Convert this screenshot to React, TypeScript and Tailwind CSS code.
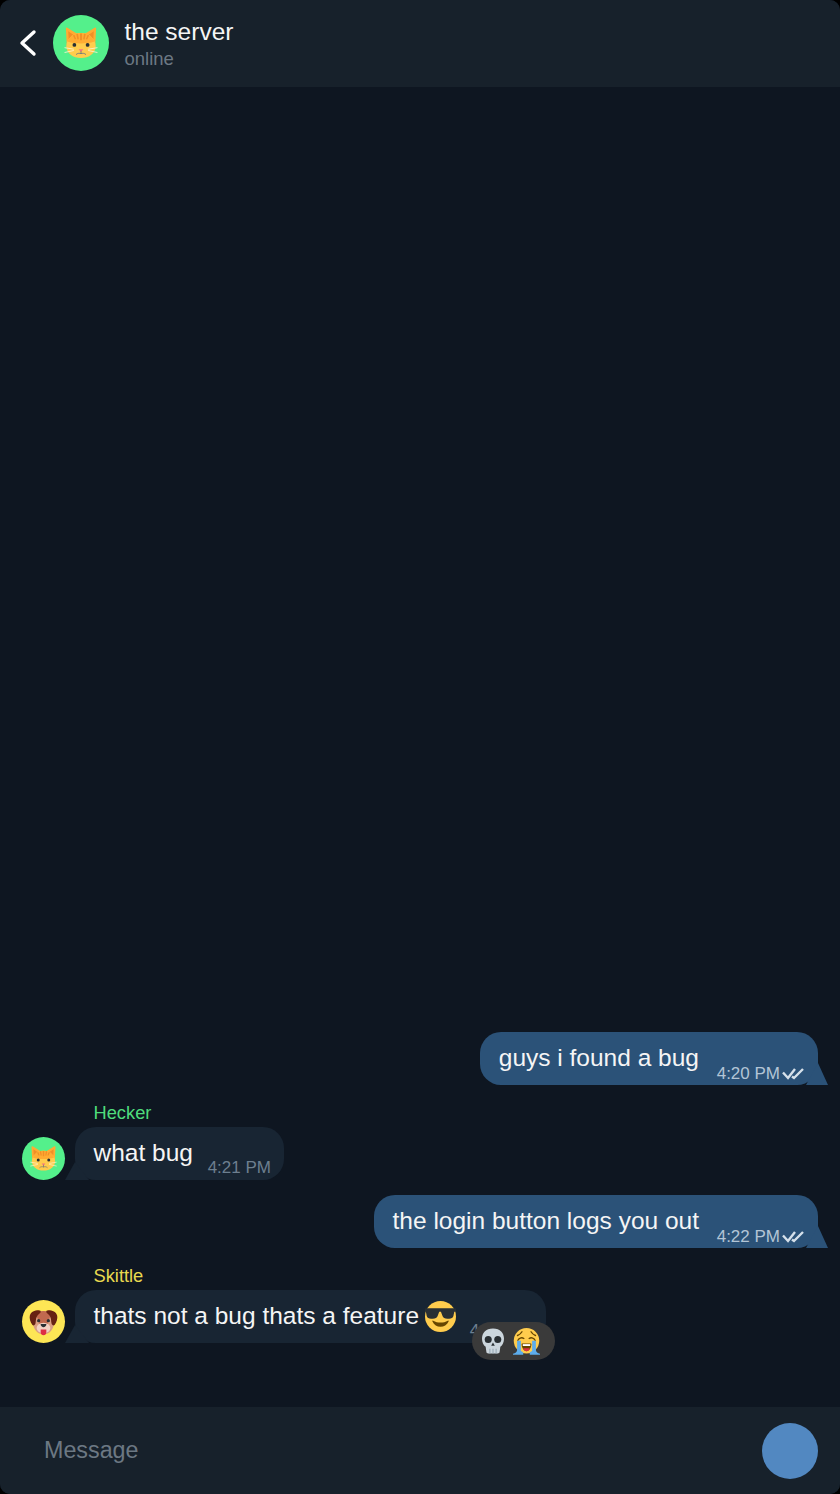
import type { ReactNode } from 'react';

function CatFace({ className }: { className: string }) {
  return (
    <svg className={className} viewBox="0 0 36 36">
      <path fill="#FFAC33" d="M2 2.500c0-.8.800-1.200 1.500-.7L17 10 3 22zM34 2.500c0-.8-.8-1.200-1.500-.7L19 10l14 12z" />
      <path fill="#F18F26" d="M4.500 5.500L5 15l6-5zM31.500 5.500L31 15l-6-5z" />
      <path fill="#FFCC4D" d="M33.500 21.500C33.500 29 26.500 34 18 34S2.500 29 2.500 21.500 9.500 7.500 18 7.500s15.500 6.500 15.500 14z" />
      <path fill="#FFAC33" d="M18 7.500c-6.500 0-12 3.500-14.300 9C8 18 13 18.500 18 18.500s10-.5 14.300-2C30 11 24.500 7.500 18 7.500z" />
      <path fill="#F18F26" d="M17 8h2v7h-2zM13 8.500l1.800-.4.9 6-1.500.2zM23 8.500l-1.800-.4-.9 6 1.500.2zM9.500 10l1.500-.8 1.800 4.500-1.300.5zM26.500 10l-1.500-.8-1.800 4.500 1.300.5z" />
      <circle fill="#292F33" cx="11" cy="20" r="2" />
      <circle fill="#292F33" cx="25" cy="20" r="2" />
      <path fill="#F4707F" d="M15.500 24.500h5L18 27.500z" />
      <path fill="none" stroke="#67757F" strokeWidth="0.9" strokeLinecap="round" d="M18 27v2.200M13 30c1.500-1.400 3.500-1.200 5-.8 1.500-.4 3.500-.6 5 .8" />
      <path fill="none" stroke="#FEF3D0" strokeWidth="0.9" strokeLinecap="round" d="M1 23l9 1.500M1 28l9-2M35 23l-9 1.500M35 28l-9-2" />
    </svg>
  );
}

function DogFace({ className }: { className: string }) {
  return (
    <svg className={className} viewBox="0 0 36 36">
      <path fill="#D99E82" d="M31 19c0 9-5.800 15-13 15S5 28 5 19 10.800 5 18 5s13 5 13 14z" />
      <path fill="#C1694F" d="M18 5c-4 0-7 2-8.800 5.500C11 15 13 19 13 22h10c0-3 2-7 3.800-11.500C25 7 22 5 18 5z" />
      <path fill="#662113" d="M12 4C7 4 2 6 1 11c-.6 3 .5 8 3 11 1.500 1.700 3.500.5 4-1.500.8-3.500 0-5 2-9 1-2.500 4-3.500 4.500-5C15 5.200 14 4 12 4zM24 4c5 0 10 2 11 7 .6 3-.5 8-3 11-1.500 1.700-3.500.5-4-1.500-.8-3.500 0-5-2-9-1-2.500-4-3.500-4.500-5C21 5.200 22 4 24 4z" />
      <ellipse fill="#F2D1C4" cx="18" cy="26" rx="8.500" ry="6.500" />
      <circle fill="#292F33" cx="12" cy="17" r="2" />
      <circle fill="#292F33" cx="24" cy="17" r="2" />
      <path fill="#292F33" d="M14.500 21h7c.5 2-2 4-3.500 4s-4-2-3.500-4z" />
      <path fill="#DD2E44" d="M14.500 28h7v3.500c0 2-1.500 3.500-3.500 3.500s-3.500-1.500-3.500-3.500z" />
    </svg>
  );
}

function Sunglasses({ className }: { className: string }) {
  return (
    <svg className={className} viewBox="0 0 36 36">
      <circle fill="#FFCC4D" cx="18" cy="18" r="18" />
      <path fill="#664500" d="M8.500 23.500c2 4.500 5.500 6.500 9.500 6.500s7.500-2 9.500-6.500c.2-.6-.4-1-1-.7C24 24.300 21 25 18 25s-6-.7-8.500-2.200c-.6-.3-1.200.1-1 .7z" />
      <path fill="#292F33" d="M1 8.500h34c.6 0 1 .4 1 1v2c0 .6-.4 1-1 1h-1l-1 5c-.5 2.300-2.500 3-5 3h-2c-3 0-5-1-6-4l-1.500-4h-2L15 16.500c-1 3-3 4-6 4H7c-2.500 0-4.500-.7-5-3l-1-5H1c-.6 0-1-.4-1-1v-2c0-.6.4-1 1-1z" />
    </svg>
  );
}

function Skull({ className }: { className: string }) {
  return (
    <svg className={className} viewBox="3 1 30 34">
      <path fill="#CCD6DD" d="M18 1C8 1 3 7.500 3 15c0 5 2 9 5 11l1 7c.2 1.300 1.200 2 2.500 2h13c1.300 0 2.300-.7 2.500-2l1-7c3-2 5-6 5-11 0-7.500-5-14-15-14z" />
      <circle fill="#292F33" cx="11.500" cy="16" r="4.800" />
      <circle fill="#292F33" cx="24.500" cy="16" r="4.800" />
      <path fill="#292F33" d="M18 20l2.500 4.500h-5z" />
      <path fill="#99AAB5" d="M13 28.500h1.500V35H13zM17.250 28.500h1.500V35h-1.500zM21.500 28.500H23V35h-1.500z" />
    </svg>
  );
}

function LoudCry({ className }: { className: string }) {
  return (
    <svg className={className} viewBox="0 0 36 36">
      <circle fill="#FFCC4D" cx="18" cy="17" r="17" />
      <path fill="none" stroke="#664500" strokeWidth="1.800" strokeLinecap="round" d="M6 10c2.500-1 4.500-2.500 6-5M30 10c-2.500-1-4.500-2.500-6-5" />
      <path fill="none" stroke="#664500" strokeWidth="1.800" strokeLinecap="round" strokeLinejoin="round" d="M6.500 16.500c1-3 5-4.500 8-2.500M29.500 16.500c-1-3-5-4.500-8-2.500" />
      <path fill="#664500" d="M12.500 20.500h11c.8 0 1 .5 1 1.200 0 4-2.500 9.300-6.500 9.300s-6.500-5.300-6.500-9.300c0-.7.200-1.200 1-1.200z" />
      <path fill="#DD2E44" d="M13.500 27h9c-1 2.500-2.500 4-4.500 4s-3.500-1.500-4.500-4z" />
      <path fill="#FFF" d="M13 21.500h10V24H13z" />
      <path fill="#5DADEC" d="M5.500 17h5v13.500c2.500 1 4 2.500 3 5H0c-1 0-1-1 0-1.200 3-.8 5.500-2.300 5.500-5zM30.500 17h-5v13.500c-2.500 1-4 2.500-3 5H36c1 0 1-1 0-1.200-3-.8-5.500-2.300-5.500-5z" />
    </svg>
  );
}

function DoubleCheck() {
  return (
    <svg className="w-[22px] h-[14px]" viewBox="0 0 22 14" fill="none" stroke="#d5e0ea" strokeWidth="2.400">
      <path d="M1 6.500l5 5.500L13 3" />
      <path d="M10 10.500l2 1.500 9-9" />
    </svg>
  );
}

function Outgoing({ text, time }: { text: string; time: string }) {
  return (
    <div className="flex justify-end pr-[22px]">
      <div className="relative h-[53px] rounded-[21px] bg-[#2b5278] pl-[18.500px] pr-[119px] flex items-center">
        <span className="text-[24.500px] text-[#f5f5f5] -mt-[1px]">{text}</span>
        <div className="absolute right-[14px] bottom-[-1px] flex items-center gap-[2px] text-[17px] text-[#b3c5d6]">
          <span>{time}</span>
          <DoubleCheck />
        </div>
        <svg className="absolute right-[-10px] bottom-0 w-[22px] h-[22px]" viewBox="0 0 22 22" fill="#2b5278">
          <path d="M12 0L22 22H0z" />
        </svg>
      </div>
    </div>
  );
}

function Incoming({
  name,
  nameColor,
  avatar,
  text,
  time,
  pad,
  children,
}: {
  name: string;
  nameColor: string;
  avatar: ReactNode;
  text: ReactNode;
  time: string;
  pad: string;
  children?: ReactNode;
}) {
  return (
    <div className="pl-[22px] flex items-end gap-[10px]">
      {avatar}
      <div className="flex flex-col">
        <div className={`h-[27px] pl-[18.500px] text-[18.300px] leading-[26px] ${nameColor}`}>{name}</div>
        <div className={`relative h-[53px] rounded-[21px] bg-[#182533] pl-[18.500px] flex items-center ${pad}`}>
          <span className="flex items-center text-[24.500px] text-[#f5f5f5] -mt-[1px]">{text}</span>
          <span className="absolute right-[13px] bottom-0 text-[17px] text-[#6d7f8f]">{time}</span>
          <svg className="absolute left-[-10px] bottom-0 w-[24px] h-[18px]" viewBox="0 0 24 18" fill="#182533">
            <path d="M10 0L24 18H0z" />
          </svg>
          {children}
        </div>
      </div>
    </div>
  );
}

export default function App() {
  return (
    <div className="h-[1494px] w-[840px] bg-black font-['Liberation_Sans',Arial,sans-serif]">
      <div className="h-full flex flex-col rounded-[10px] overflow-hidden bg-[#0e1621]">
        <header className="h-[87px] shrink-0 bg-[#17212b] flex items-center pl-[18px]">
          <svg className="w-[20px] h-[28px] -mt-[1px]" viewBox="0 0 20 28" fill="none" stroke="#ffffff" strokeWidth="3.400" strokeLinecap="round" strokeLinejoin="round">
            <path d="M16 3L4 14l12 11" />
          </svg>
          <div className="ml-[15px] w-[56px] h-[56px] -mt-[1px] rounded-full bg-[#54f08b] flex items-center justify-center">
            <CatFace className="w-[34px] h-[34px]" />
          </div>
          <div className="ml-[15.500px] -mt-[2px] flex flex-col">
            <span className="text-[24.500px] leading-[32px] text-[#f5f5f5]">the server</span>
            <span className="text-[18.500px] leading-[22px] text-[#6c7883]">online</span>
          </div>
        </header>

        <main className="flex-1 flex flex-col justify-end pb-[64px]">
          <Outgoing text="guys i found a bug" time="4:20 PM" />
          <div className="mt-[15px]">
            <Incoming
              name="Hecker"
              nameColor="text-[#4fdc7c]"
              avatar={
                <div className="w-[43px] h-[43px] rounded-full bg-[#54f08b] flex items-center justify-center">
                  <CatFace className="w-[27px] h-[27px]" />
                </div>
              }
              text="what bug"
              time="4:21 PM"
              pad="pr-[91px]"
            />
          </div>
          <div className="mt-[15px]">
            <Outgoing text="the login button logs you out" time="4:22 PM" />
          </div>
          <div className="mt-[15px]">
            <Incoming
              name="Skittle"
              nameColor="text-[#e9d94f]"
              avatar={
                <div className="w-[43px] h-[43px] rounded-full bg-[#fde655] flex items-center justify-center">
                  <DogFace className="w-[29px] h-[29px]" />
                </div>
              }
              text={
                <>
                  thats not a bug thats a feature
                  <Sunglasses className="ml-[6px] w-[31px] h-[31px]" />
                </>
              }
              time="4:23 PM"
              pad="pr-[90px]"
            >
              <div className="absolute left-[397px] top-[32px] w-[83px] h-[38px] rounded-full bg-[#3a3a3a] flex items-center pl-[10px] gap-[9px]">
                <Skull className="w-[22px] h-[26px]" />
                <LoudCry className="w-[27px] h-[27px]" />
              </div>
            </Incoming>
          </div>
        </main>

        <footer className="h-[87px] shrink-0 bg-[#17212b] flex items-center pl-[44px] pr-[22px] justify-between">
          <span className="text-[23.300px] text-[#6c7883]">Message</span>
          <div className="w-[56px] h-[56px] rounded-full bg-[#5288c1]" />
        </footer>
      </div>
    </div>
  );
}
